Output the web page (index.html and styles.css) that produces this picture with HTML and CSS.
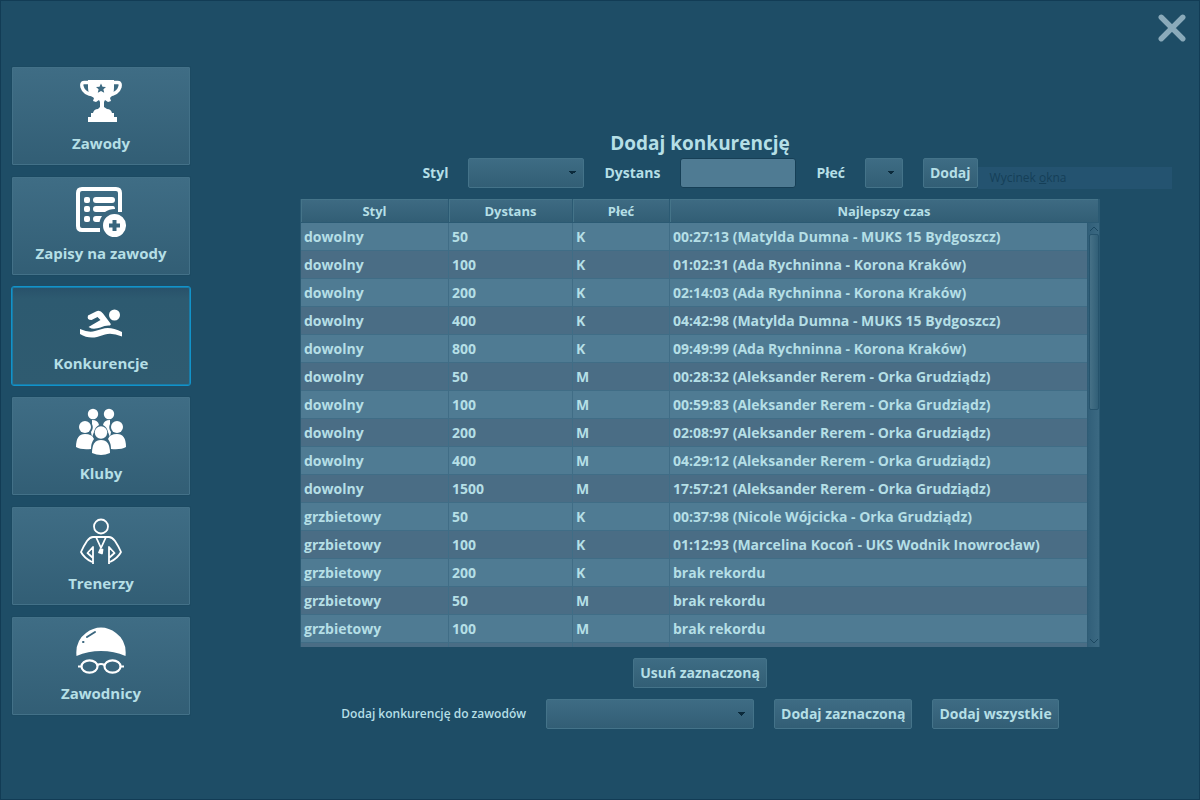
FILE: index.html
```html
<!DOCTYPE html>
<html lang="pl">
<head>
<meta charset="utf-8">
<title>Dodaj konkurencję</title>
<link rel="stylesheet" href="styles.css">
</head>
<body>
<div class="app">
  <nav class="sidebar">
    <button class="nav" type="button">
      <svg class="icon" viewBox="0 0 50 50" fill="#fff">
        <path fill="none" stroke="#fff" stroke-width="3.4" d="M14 5.500H8Q5 5.500 6 10Q8 17 18 18M36 5.500h6Q45 5.500 44 10Q42 17 32 18"/>
        <path fill-rule="evenodd" d="M12 3h26v8q0 7-4 10l1 3-3 1-3-2-1 2v5l3 2q4 0 5 4h2v4h3v5H12v-5h3v-4h2q1-4 5-4l2-2v-5l-1-2-3 2-3-1 1-3q-6-3-6-10zM25 6.500l-1.500 3.200-3.500.3 2.600 2.300-.8 3.500 3.200-1.900 3.200 1.900-.8-3.500 2.600-2.300-3.500-.3z"/>
      </svg>
      <span>Zawody</span>
    </button>
    <button class="nav" type="button">
      <svg class="icon" viewBox="0 0 50 50" fill="#fff">
        <path fill="none" stroke="#fff" stroke-width="4" stroke-linejoin="round" stroke-linecap="butt" d="M24 43H6Q2 43 2 39V6Q2 2 6 2H40Q44 2 44 6V25"/>
        <rect x="8" y="10" width="6" height="6" rx="2"/><rect x="17" y="10" width="22" height="6" rx="3"/>
        <rect x="8" y="19" width="6" height="6" rx="2"/><path d="M20 19h17q2 0 2 3-6 0-10 3h-9q-3 0-3-3t3-3z"/>
        <rect x="8" y="29" width="6" height="6" rx="2"/><path d="M20 29h6q-2 3-2.500 6H20q-3 0-3-3t3-3z"/>
        <path fill-rule="evenodd" d="M38.500 27a11.500 11.500 0 1 1 0 23 11.500 11.500 0 0 1 0-23zM36.500 33v3.500H33v4h3.500V44h4v-3.500H44v-4h-3.500V33z"/>
      </svg>
      <span>Zapisy na zawody</span>
    </button>
    <button class="nav nav-active" type="button" aria-current="page">
      <svg class="icon" viewBox="0 0 50 50" fill="#fff">
        <circle cx="38.500" cy="18" r="5.500"/>
        <path d="M12 18.500l8-4q4-2 7 2l7.500 10q1 2-2 2-4 0-8 2-4 1.500-9 1l-3-1.500 12-7-3-3-6 3q-5 0-3.500-4.500z"/>
        <path d="M4 32q9 4 15 2l7-2q8-3 20 3v4.500q-10-4-17-2l-8 2.500q-9 2-17-3z"/>
      </svg>
      <span>Konkurencje</span>
    </button>
    <button class="nav" type="button">
      <svg class="icon" viewBox="0 0 50 50" fill="#fff">
        <circle cx="17" cy="7" r="5.200"/><circle cx="33" cy="7" r="5.200"/>
        <path d="M16 13q6 0 7 5-4 2-5 7l-2 5-1-5q3-4 1-8zM34 13q-6 0-7 5 4 2 5 7l2 5 1-5q-3-4-1-8z"/>
        <circle cx="9" cy="20" r="6"/><circle cx="41" cy="20" r="6"/>
        <path d="M0 40q0-13 9-13 7 0 9 5-3 4-3 10-10 1-15-2zM50 40q0-13-9-13-7 0-9 5 3 4 3 10 10 1 15-2z"/>
        <circle cx="25" cy="25.500" r="6.200"/>
        <path d="M16 46q0-13 9-13t9 13q-9 4-18 0z"/>
      </svg>
      <span>Kluby</span>
    </button>
    <button class="nav" type="button">
      <svg class="icon" viewBox="0 0 50 50" fill="none" stroke="#fff" stroke-width="1.800" stroke-linejoin="round">
        <circle cx="25" cy="9.500" r="7"/>
        <path d="M17 47V30l-5.500 6 5.500 5M16 45q-8-4-11-10 2-5 6-11 3-4 6-4h16q3 0 6 4 4 6 6 11-3 6-11 10M33 47V30l5.500 6-5.500 5M20 20l5 11M30 20l-5 11"/>
        <path fill="#fff" d="M24.500 32l2 .5-.5 4-3-1z"/>
      </svg>
      <span>Trenerzy</span>
    </button>
    <button class="nav" type="button">
      <svg class="icon" viewBox="0 0 50 50" fill="#fff">
        <path d="M.5 29Q-1 14 10 6 17 .5 25 .5T40 6Q51 14 49.500 29 38 24 25 24T.5 29z"/>
        <path fill="none" stroke="#3a667e" stroke-width="2" stroke-linecap="round" d="M11 10l8-5M7 15h.5"/>
        <g fill="none" stroke="#fff" stroke-width="2.200"><ellipse cx="13.500" cy="39.500" rx="8" ry="6.200"/><ellipse cx="36.500" cy="39.500" rx="8" ry="6.200"/><path d="M21.500 38q3.500-2 7 0M6 39.500H2M44 39.500h4"/></g>
      </svg>
      <span>Zawodnicy</span>
    </button>
  </nav>

  <main class="content">
    <h1 class="title">Dodaj konkurencję</h1>
    <form class="add-form">
      <label for="style">Styl</label>
      <select id="style" class="box wide"><option></option></select>
      <label for="distance">Dystans</label>
      <input id="distance" class="text-input wide" type="text">
      <label for="gender">Płeć</label>
      <select id="gender" class="box narrow"><option></option></select>
      <div class="add-wrap">
        <button class="btn" type="button">Dodaj</button>
        <span class="ghost">Wycinek <u>o</u>kna</span>
      </div>
    </form>

    <div class="table-view">
      <table class="events">
        <colgroup><col class="c-style"><col class="c-dist"><col class="c-gender"><col></colgroup>
        <thead><tr><th>Styl</th><th>Dystans</th><th>Płeć</th><th>Najlepszy czas</th></tr></thead>
        <tbody>
          <tr><td>dowolny</td><td>50</td><td>K</td><td>00:27:13 (Matylda Dumna - MUKS 15 Bydgoszcz)</td></tr>
          <tr><td>dowolny</td><td>100</td><td>K</td><td>01:02:31 (Ada Rychninna - Korona Kraków)</td></tr>
          <tr><td>dowolny</td><td>200</td><td>K</td><td>02:14:03 (Ada Rychninna - Korona Kraków)</td></tr>
          <tr><td>dowolny</td><td>400</td><td>K</td><td>04:42:98 (Matylda Dumna - MUKS 15 Bydgoszcz)</td></tr>
          <tr><td>dowolny</td><td>800</td><td>K</td><td>09:49:99 (Ada Rychninna - Korona Kraków)</td></tr>
          <tr><td>dowolny</td><td>50</td><td>M</td><td>00:28:32 (Aleksander Rerem - Orka Grudziądz)</td></tr>
          <tr><td>dowolny</td><td>100</td><td>M</td><td>00:59:83 (Aleksander Rerem - Orka Grudziądz)</td></tr>
          <tr><td>dowolny</td><td>200</td><td>M</td><td>02:08:97 (Aleksander Rerem - Orka Grudziądz)</td></tr>
          <tr><td>dowolny</td><td>400</td><td>M</td><td>04:29:12 (Aleksander Rerem - Orka Grudziądz)</td></tr>
          <tr><td>dowolny</td><td>1500</td><td>M</td><td>17:57:21 (Aleksander Rerem - Orka Grudziądz)</td></tr>
          <tr><td>grzbietowy</td><td>50</td><td>K</td><td>00:37:98 (Nicole Wójcicka - Orka Grudziądz)</td></tr>
          <tr><td>grzbietowy</td><td>100</td><td>K</td><td>01:12:93 (Marcelina Kocoń - UKS Wodnik Inowrocław)</td></tr>
          <tr><td>grzbietowy</td><td>200</td><td>K</td><td>brak rekordu</td></tr>
          <tr><td>grzbietowy</td><td>50</td><td>M</td><td>brak rekordu</td></tr>
          <tr><td>grzbietowy</td><td>100</td><td>M</td><td>brak rekordu</td></tr>
          <tr><td></td><td></td><td></td><td></td></tr>
        </tbody>
      </table>
      <div class="scrollbar">
        <svg class="arrow" viewBox="0 0 10 10"><path d="M1 7l4-4 4 4"/></svg>
        <div class="thumb"></div>
        <svg class="arrow" viewBox="0 0 10 10"><path d="M1 3l4 4 4-4"/></svg>
      </div>
    </div>

    <button class="btn" type="button">Usuń zaznaczoną</button>
    <form class="assign-form">
      <label class="small" for="meet">Dodaj konkurencję do zawodów</label>
      <select id="meet" class="box meet"><option></option></select>
      <button class="btn" type="button">Dodaj zaznaczoną</button>
      <button class="btn" type="button">Dodaj wszystkie</button>
    </form>
  </main>

  <button class="close" type="button" aria-label="Zamknij">
    <svg viewBox="0 0 26 26"><path d="M3 3l20 20M23 3L3 23"/></svg>
  </button>
</div>
</body>
</html>
```
FILE: styles.css
```css
* { box-sizing: border-box; }

body {
  margin: 0;
  background: #1e4d66;
  color: #b5dfe6;
  font: 700 14px/18px "Open Sans", "Noto Sans", sans-serif;
}

button, input, select { font: inherit; color: inherit; }

.app {
  position: relative;
  display: flex;
  min-height: 100vh;
  box-shadow: inset 0 0 0 1px #123c55;
}

.sidebar {
  display: flex;
  flex-direction: column;
  gap: 10px;
  width: 200px;
  padding: 66px 9px 0 11px;
}

.nav {
  display: flex;
  flex-direction: column;
  align-items: center;
  height: 100px;
  padding: 10px 0 0;
  border: 1px solid #1c4a62;
  border-radius: 2px;
  background: linear-gradient(#3f6d85, #325e75);
  box-shadow: inset 0 0 0 1px #437188;
  font-size: 15px;
  line-height: 20px;
  gap: 6px;
}

.nav-active {
  border: 1px solid #1193ca;
  border-radius: 3px;
  background: linear-gradient(#28516a, #2d5a70 12%, #2f5b70);
  box-shadow: inset 0 0 0 1px #1b7ba6;
}

.icon { width: 50px; height: 50px; }

.content {
  flex: 1;
  display: flex;
  flex-direction: column;
  align-items: center;
  padding-top: 130px;
}

.title {
  margin: 0;
  font-size: 19px;
  line-height: 26px;
}

.add-form, .assign-form { display: flex; align-items: center; }
.add-form { gap: 20px; margin-top: 2px; }

.box, .btn {
  height: 30px;
  border: 1px solid #447389;
  border-radius: 2px;
  background: linear-gradient(#3e6c84, #325e75);
}

.btn { padding: 0 6px; }

.box {
  appearance: none;
  background:
    linear-gradient(135deg, #0b2a3b 50%, transparent 50%) right 7px top 12px / 4px 4px no-repeat,
    linear-gradient(225deg, #0b2a3b 50%, transparent 50%) right 11px top 12px / 4px 4px no-repeat,
    linear-gradient(#3e6c84, #325e75);
}

.wide { width: 116px; }
.narrow { width: 38px; }
.meet { width: 208px; }

.text-input {
  height: 30px;
  border: 1px solid #163f56;
  border-radius: 3px;
  background: #4f7b93;
}

.add-wrap { position: relative; }

.ghost {
  position: absolute;
  left: 100%;
  top: 9px;
  width: 194px;
  padding-left: 12px;
  background: #245370;
  color: #153f58;
  font-size: 12px;
  font-weight: 400;
  line-height: 22px;
}

.table-view {
  position: relative;
  width: 80%;
  height: 56vh;
  margin: 11px 0;
  overflow: hidden;
  border: 1px solid #2b5a73;
  border-width: 0 1px;
}

.events {
  width: 100%;
  table-layout: fixed;
  border-collapse: separate;
  border-spacing: 0;
}

.c-style { width: 148px; }
.c-dist { width: 124px; }
.c-gender { width: 97px; }

.events th {
  height: 24px;
  padding: 0;
  border: 1px solid #2b5a73;
  border-width: 0 1px 1px 0;
  box-shadow: inset 1px 1px #457489;
  background: linear-gradient(#3e6b83, #325e75);
  font-size: 13px;
}

.events td {
  height: 28px;
  padding: 0 3px;
  border: 1px solid #406d86;
  border-width: 0 1px 1px 0;
  background: #4f7b93;
  white-space: nowrap;
}

.events tr:nth-child(even) td { background: #4a6d85; }

.scrollbar {
  position: absolute;
  top: 24px;
  right: 0;
  bottom: 0;
  display: flex;
  flex-direction: column;
  justify-content: space-between;
  align-items: center;
  width: 12px;
  padding: 1px 0;
  border-left: 1px solid #2f5c75;
  background: linear-gradient(90deg, #315f79, #3b6982);
}

.thumb {
  width: 10px;
  height: 176px;
  margin-bottom: auto;
  border: 1px solid #26536c;
  border-radius: 2px;
  background: linear-gradient(90deg, #467187, #315f77);
}

.arrow { width: 10px; height: 10px; fill: none; stroke: #1b4760; }

.assign-form { gap: 20px; margin-top: 11px; }
.small { font-size: 12px; font-weight: 600; }

.close {
  position: absolute;
  top: 14px;
  right: 14px;
  width: 28px;
  height: 28px;
  padding: 0;
  border: 0;
  background: none;
}

.close svg {
  display: block;
  width: 28px;
  height: 28px;
  fill: none;
  stroke: #8aaaba;
  stroke-width: 5;
  stroke-linecap: round;
}
```
